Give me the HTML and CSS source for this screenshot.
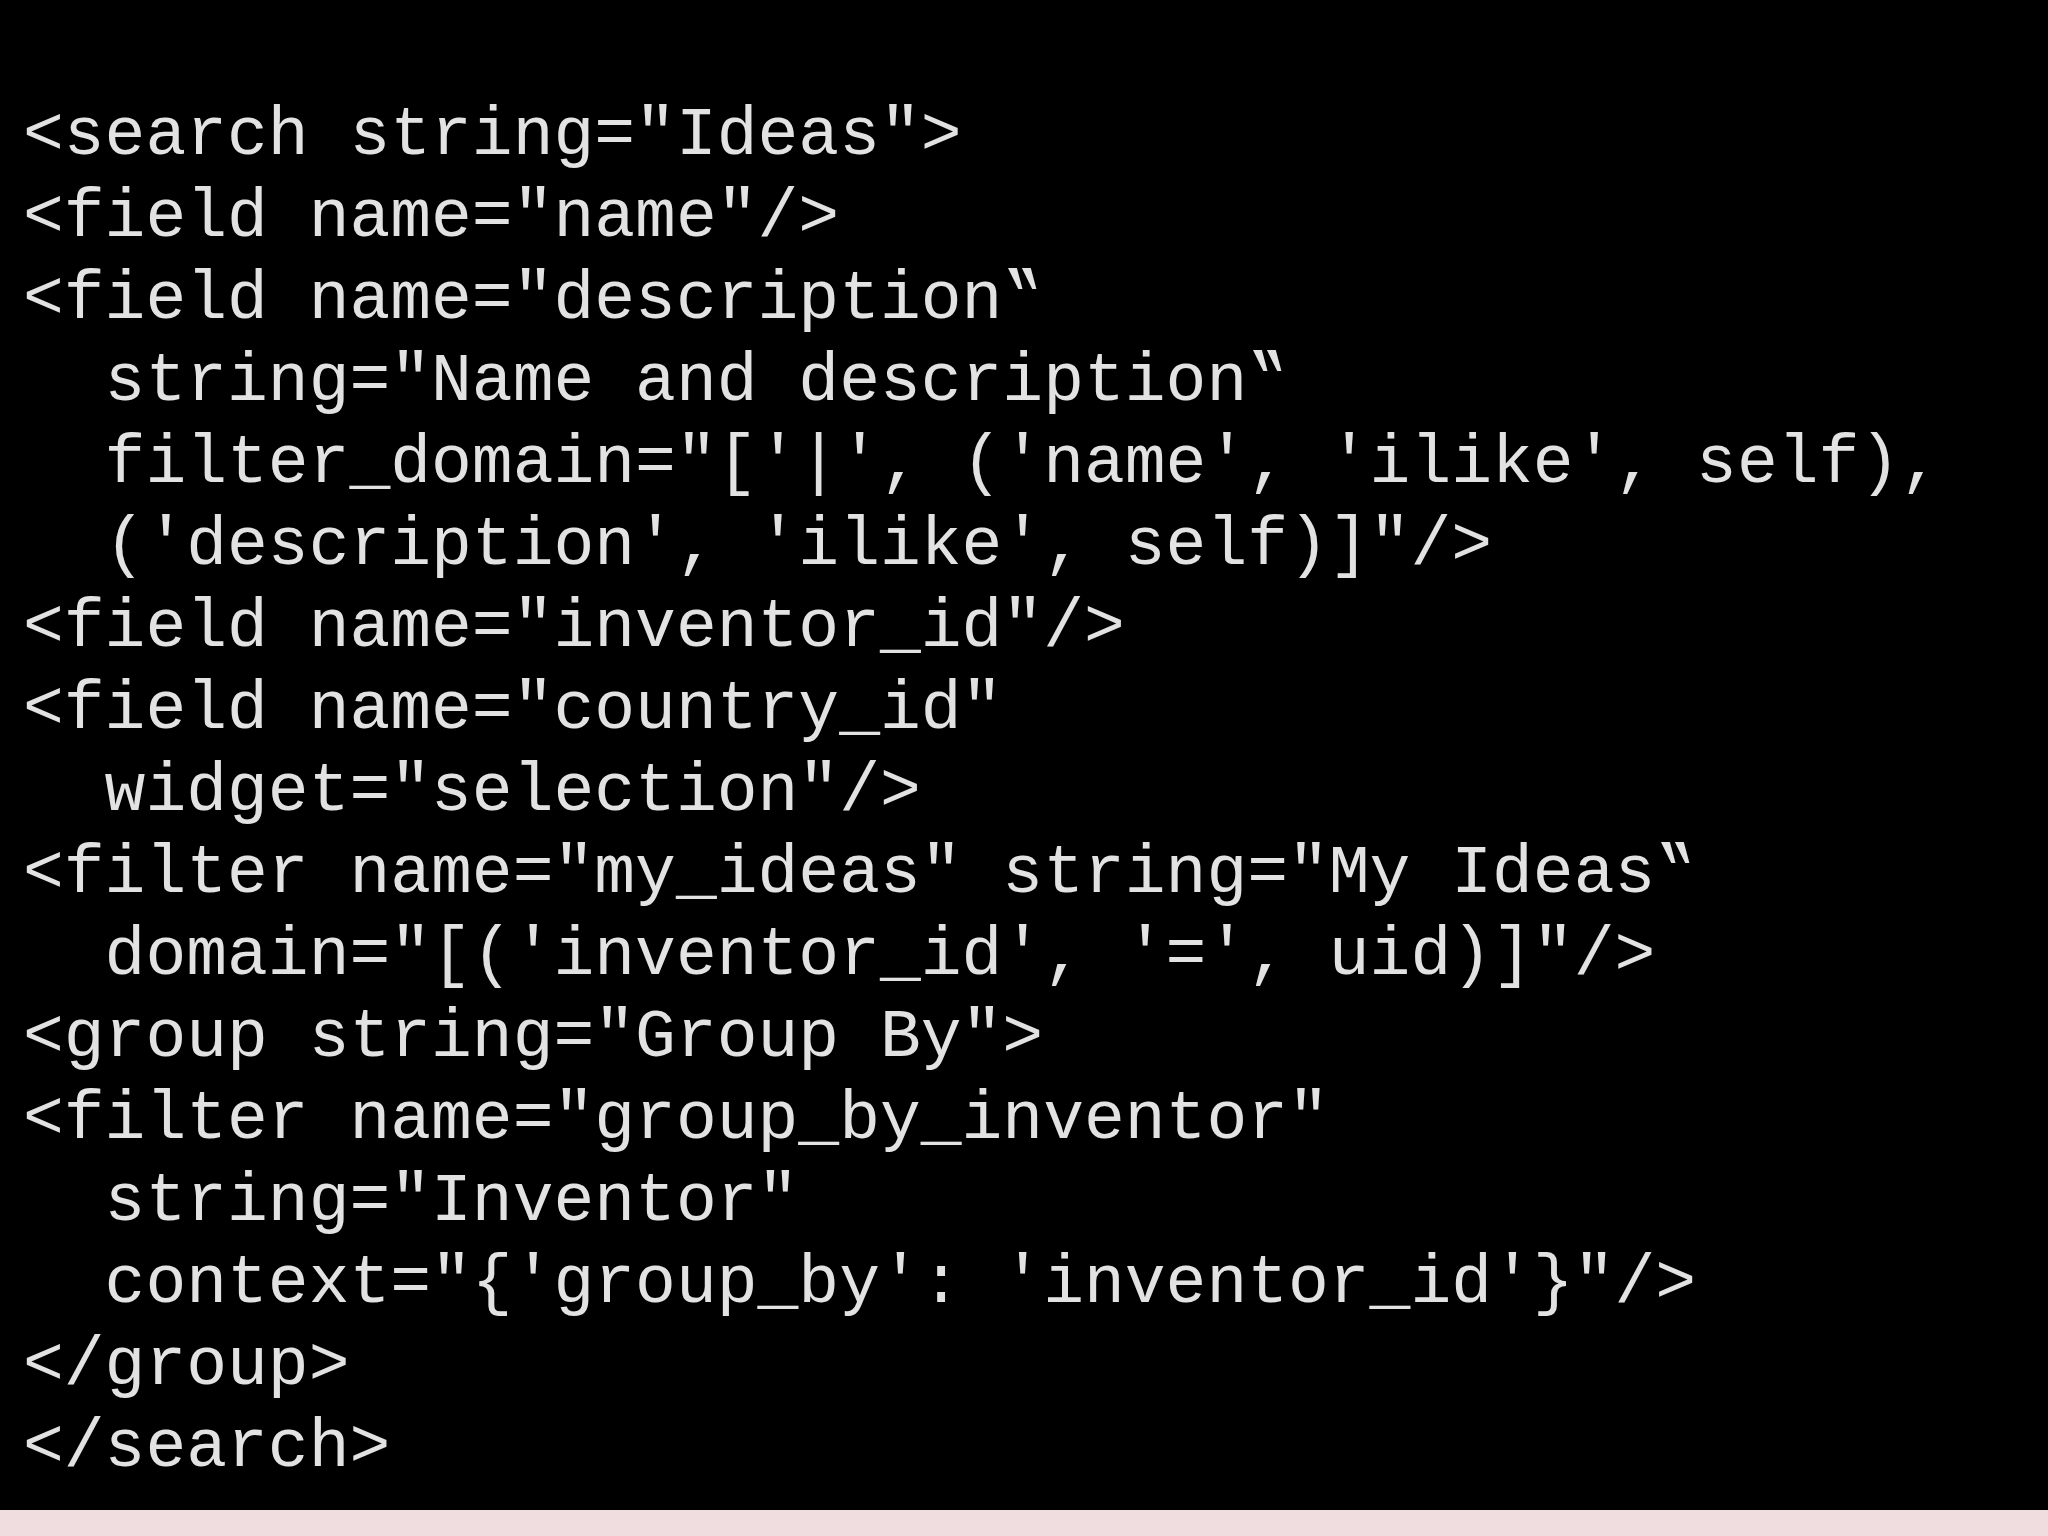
FILE: index.html
```html
<!DOCTYPE html>
<html lang="en">
<head>
<meta charset="utf-8">
<title>Search view</title>
<link rel="stylesheet" href="styles.css">
</head>
<body>
<main class="slide">
<pre class="code"><span class="line">&lt;search string="Ideas"&gt;</span>
<span class="line">&lt;field name="name"/&gt;</span>
<span class="line">&lt;field name="description‟</span>
<span class="line">  string="Name and description‟</span>
<span class="line">  filter_domain="['|', ('name', 'ilike', self),</span>
<span class="line">  ('description', 'ilike', self)]"/&gt;</span>
<span class="line">&lt;field name="inventor_id"/&gt;</span>
<span class="line">&lt;field name="country_id"</span>
<span class="line">  widget="selection"/&gt;</span>
<span class="line">&lt;filter name="my_ideas" string="My Ideas‟</span>
<span class="line">  domain="[('inventor_id', '=', uid)]"/&gt;</span>
<span class="line">&lt;group string="Group By"&gt;</span>
<span class="line">&lt;filter name="group_by_inventor"</span>
<span class="line">  string="Inventor"</span>
<span class="line">  context="{'group_by': 'inventor_id'}"/&gt;</span>
<span class="line">&lt;/group&gt;</span>
<span class="line">&lt;/search&gt;</span></pre>
</main>
<footer class="strip"></footer>
</body>
</html>
```
FILE: styles.css
```css
html, body {
  margin: 0;
  padding: 0;
  background: #000;
}
body {
  width: 2048px;
  height: 1536px;
  overflow: hidden;
  display: flex;
  flex-direction: column;
}
.slide {
  height: 1510px;
  background: #000;
  padding: 95px 0 0 23px;
  box-sizing: border-box;
}
.code {
  margin: 0;
  font-family: "Liberation Mono", "Courier New", monospace;
  font-size: 68px;
  line-height: 82px;
  color: #e2e2e2;
  white-space: pre;
}
.strip {
  flex: 1;
  background: #f0dde0;
}
```
